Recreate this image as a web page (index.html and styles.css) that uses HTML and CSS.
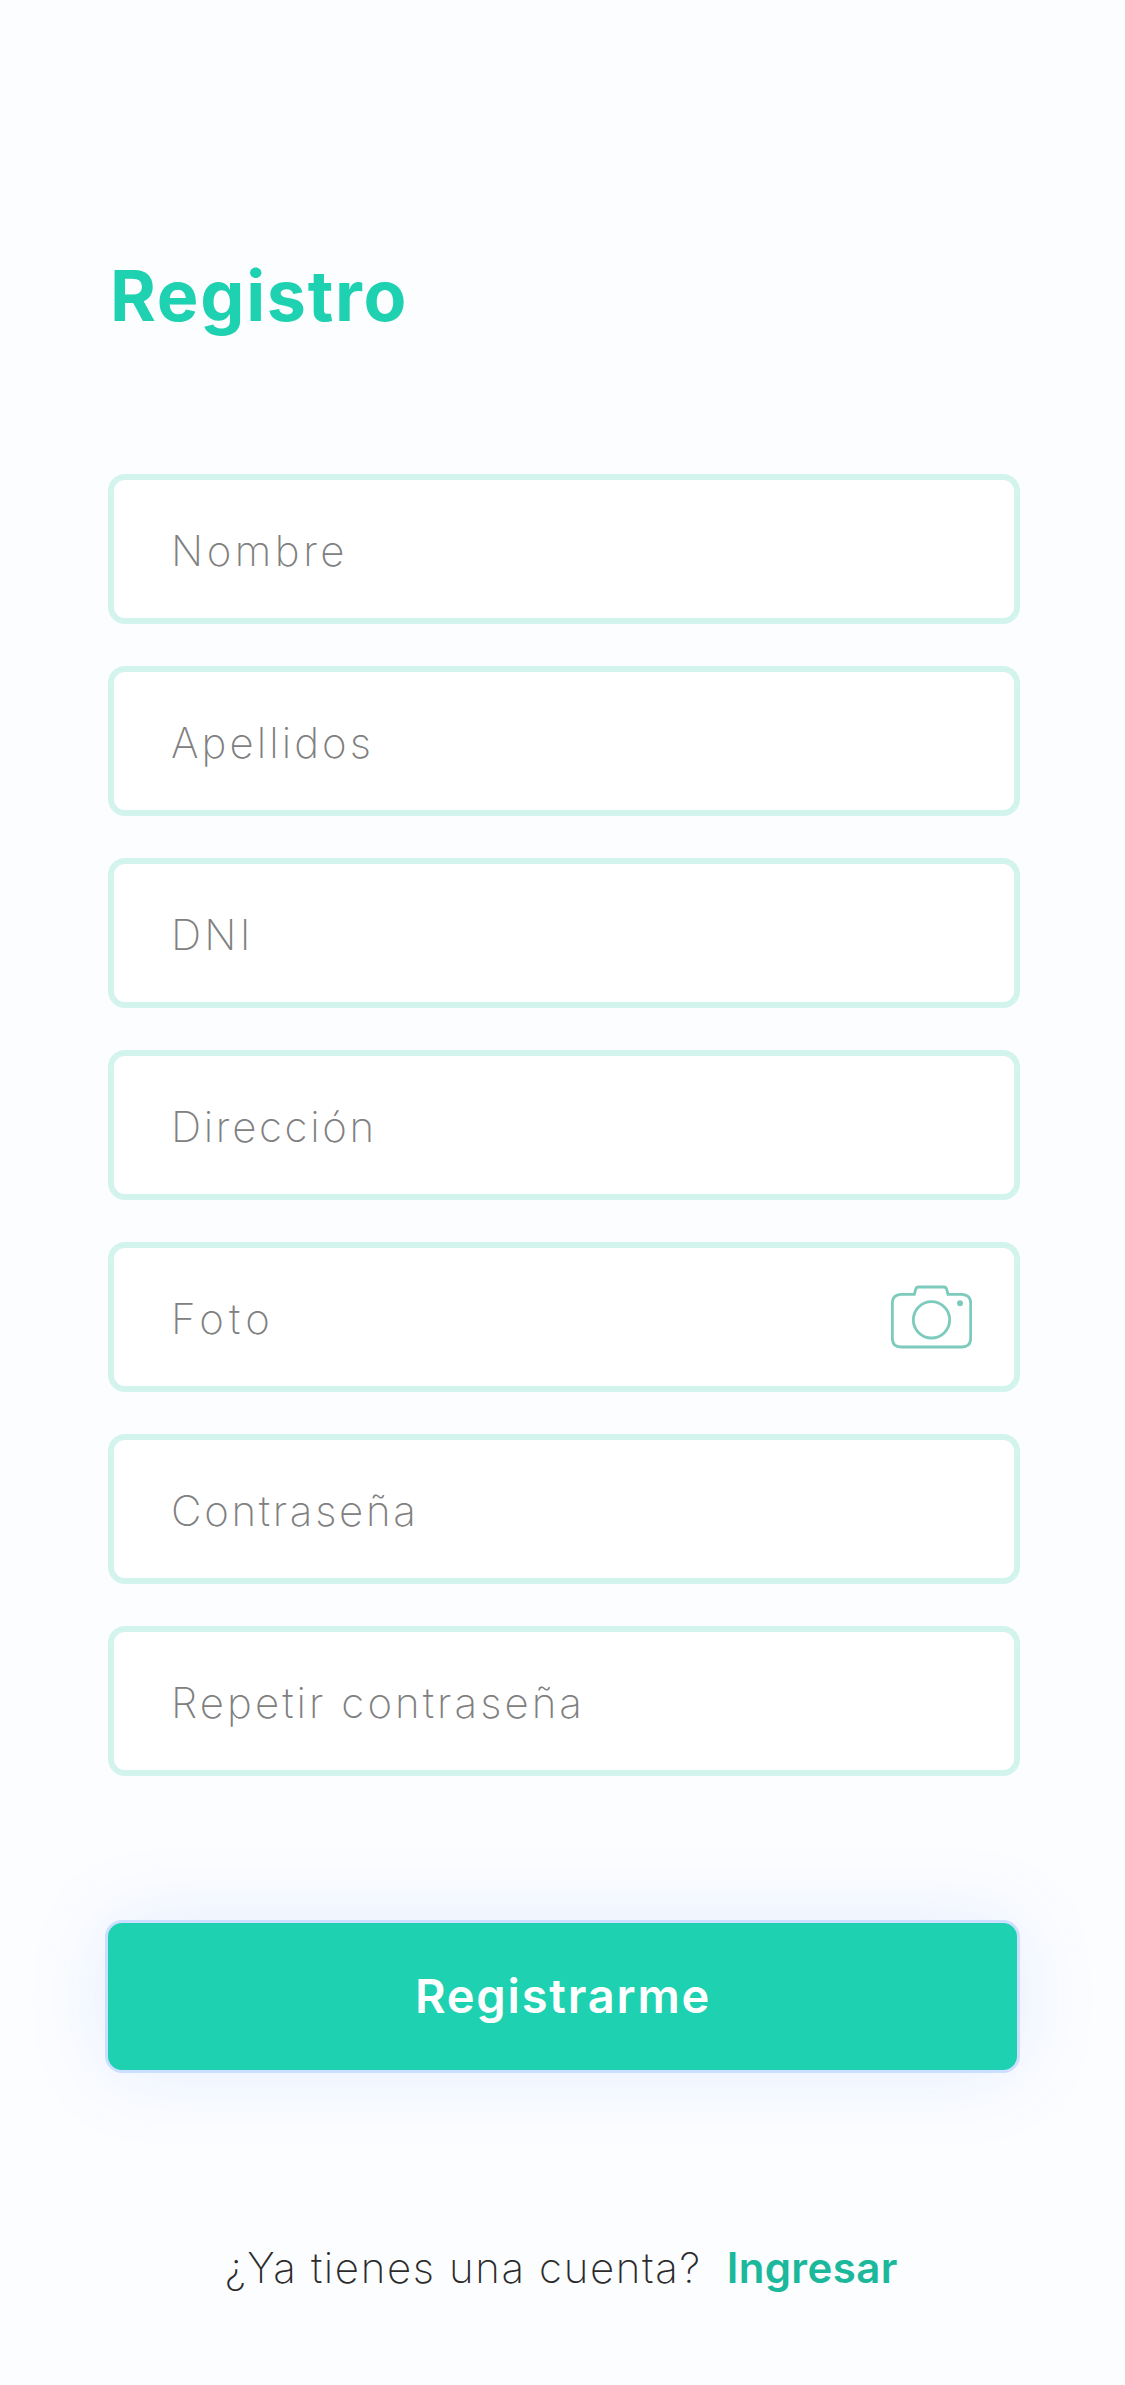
FILE: index.html
```html
<!DOCTYPE html>
<html lang="es">
<head>
<meta charset="utf-8">
<title>Registro</title>
<link rel="stylesheet" href="styles.css">
</head>
<body>
<main class="screen">
  <h1 class="title">Registro</h1>
  <form class="form">
    <div class="field"><span class="label label-nombre">Nombre</span></div>
    <div class="field"><span class="label label-apellidos">Apellidos</span></div>
    <div class="field"><span class="label label-dni">DNI</span></div>
    <div class="field"><span class="label label-direccion">Dirección</span></div>
    <div class="field">
      <span class="label label-foto">Foto</span>
      <svg class="camera" viewBox="0 0 243 192" fill="none" stroke="#7dcbbd" stroke-width="8.500" aria-hidden="true">
        <path d="M29 28H70L74 13Q76 6 83 6H158Q165 6 167 13L171 28H213Q239 30 239 54V160Q239 186 213 186H29Q4 186 4 160V54Q4 30 29 28Z"/>
        <circle cx="121.500" cy="104.500" r="54.500"/>
        <circle cx="207" cy="55" r="9" fill="#7dcbbd" stroke="none"/>
      </svg>
    </div>
    <div class="field"><span class="label label-contrasena">Contraseña</span></div>
    <div class="field"><span class="label label-repetir">Repetir contraseña</span></div>
    <button class="submit" type="button">Registrarme</button>
  </form>
  <p class="footer"><span class="question">¿Ya tienes una cuenta?</span><a class="login">Ingresar</a></p>
</main>
</body>
</html>
```
FILE: styles.css
```css
* { box-sizing: border-box; }
body {
  margin: 0;
  background: #fcfdff;
  font-family: Inter, "Liberation Sans", sans-serif;
}
.screen {
  width: 1125px;
  height: 2385px;
  padding: 251px 105px 0 108px;
  overflow: hidden;
}
.title {
  margin: 0 0 133px 2px;
  font-size: 70px;
  line-height: 90px;
  font-weight: 700;
  letter-spacing: 1.7px;
  color: #1dd1b1;
}
.form {
  display: flex;
  flex-direction: column;
  gap: 42px;
}
.field {
  display: flex;
  align-items: center;
  justify-content: space-between;
  height: 150px;
  padding: 0 42px 0 57px;
  border: 6px solid #d3f4ec;
  border-radius: 17px;
  background: #fff;
}
.label {
  padding-top: 3px;
  font-size: 42px;
  line-height: 50px;
  font-weight: 200;
  color: #808080;
}
.label-nombre { letter-spacing: 3.5px; }
.label-apellidos { letter-spacing: 3.05px; }
.label-dni { letter-spacing: 3.2px; }
.label-direccion { letter-spacing: 2.65px; }
.label-foto { letter-spacing: 5.2px; }
.label-contrasena { letter-spacing: 2.7px; }
.label-repetir { letter-spacing: 3.06px; }
.camera {
  width: 81px;
  height: 64px;
}
.submit {
  height: 153px;
  margin: 102px 0 0 -3px;
  padding: 0 0 3px 1px;
  border: 3px solid #cddffe;
  border-radius: 17px;
  background: #1dd1b1;
  box-shadow: 0 0 82px rgba(60, 120, 255, 0.12);
  color: #fff;
  font-family: inherit;
  font-size: 47px;
  font-weight: 600;
  letter-spacing: 1.8px;
}
.footer {
  display: flex;
  align-items: baseline;
  margin: 170px 0 0 117px;
  font-size: 42px;
  line-height: 50px;
  white-space: nowrap;
}
.question {
  font-weight: 200;
  letter-spacing: 1.62px;
  color: #2b2b2b;
}
.login {
  margin-left: 25px;
  font-weight: 600;
  letter-spacing: 0.38px;
  color: #1bb89b;
}
```
